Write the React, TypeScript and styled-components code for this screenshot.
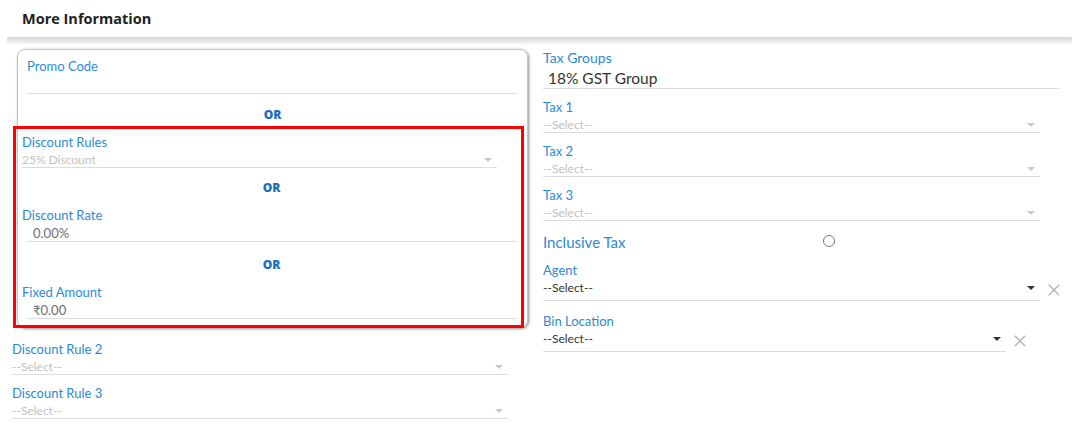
import React from 'react';
import styled, { createGlobalStyle } from 'styled-components';

const GlobalStyle = createGlobalStyle`
  body {
    margin: 0;
    background: #fff;
    font-family: Lato, 'Open Sans', sans-serif;
  }
`;

type Tone = 'empty' | 'muted' | 'dark' | 'grey' | 'big';

interface FieldProps {
  label: string;
  value?: string;
  tone?: Tone;
  arrow?: boolean;
  clear?: boolean;
  lineWidth?: number;
  indent?: number;
  labelSize?: number;
  gap?: number;
}

const Field = ({
  label,
  value = '',
  tone = 'muted',
  arrow,
  clear,
  lineWidth,
  indent = 0,
  labelSize = 13,
  gap = 0,
}: FieldProps) => (
  <FieldWrap $gap={gap}>
    <Label $size={labelSize}>{label}</Label>
    <InputRow>
      <Input $width={lineWidth} $indent={indent} $tone={tone}>
        <span>{value}</span>
        {arrow && <Caret $dark={tone === 'dark'} />}
      </Input>
      {clear && (
        <ClearIcon viewBox="0 0 16 16">
          <path d="M2 2 L14 14 M14 2 L2 14" />
        </ClearIcon>
      )}
    </InputRow>
  </FieldWrap>
);

const App = () => {
  return (
    <>
      <GlobalStyle />
      <Header>More Information</Header>
      <ShadowBar />
      <Columns>
        <LeftColumn>
          <Card>
            <Field label="Promo Code" tone="empty" lineWidth={490} />
            <Or $pad={9}>OR</Or>
            <Highlight>
              <Field label="Discount Rules" value="25% Discount" arrow lineWidth={475} />
              <Or $top={12}>OR</Or>
              <Field label="Discount Rate" value="0.00%" tone="grey" indent={6} lineWidth={490} />
              <Or $top={15}>OR</Or>
              <Field label="Fixed Amount" value="₹0.00" tone="grey" indent={6} lineWidth={490} />
            </Highlight>
          </Card>
          <Below>
            <Field label="Discount Rule 2" value="--Select--" arrow lineWidth={496} />
            <Field label="Discount Rule 3" value="--Select--" arrow lineWidth={496} gap={9} />
          </Below>
        </LeftColumn>
        <RightColumn>
          <Field label="Tax Groups" value="18% GST Group" tone="big" indent={5} lineWidth={516} labelSize={14} />
          <Field label="Tax 1" value="--Select--" arrow lineWidth={497} gap={9} />
          <Field label="Tax 2" value="--Select--" arrow lineWidth={497} gap={9} />
          <Field label="Tax 3" value="--Select--" arrow lineWidth={497} gap={9} />
          <ToggleRow>
            <ToggleLabel>Inclusive Tax</ToggleLabel>
            <Radio />
          </ToggleRow>
          <Field label="Agent" value="--Select--" tone="dark" arrow clear lineWidth={497} />
          <Field label="Bin Location" value="--Select--" tone="dark" arrow clear lineWidth={463} gap={11} />
        </RightColumn>
      </Columns>
    </>
  );
};

const Header = styled.div`
  height: 36px;
  padding-left: 22px;
  display: flex;
  align-items: center;
  font-family: 'Open Sans', sans-serif;
  font-weight: 700;
  font-size: 14.5px;
  color: #222;
`;

const ShadowBar = styled.div`
  height: 7px;
  margin: 1px 8px 0 7px;
  background: linear-gradient(#d6d6d6, #ececec 70%, #f7f7f7);
  border-radius: 2px;
  filter: blur(0.6px);
`;

const Columns = styled.div`
  display: grid;
  grid-template-columns: 517px 1fr;
  column-gap: 14px;
  padding: 5px 0 0 12px;
`;

const LeftColumn = styled.div`
  display: flex;
  flex-direction: column;
`;

const RightColumn = styled.div`
  display: flex;
  flex-direction: column;
`;

const Card = styled.div`
  margin-left: 5px;
  width: 500px;
  border: 1px solid #c4c4c4;
  border-radius: 8px;
  box-shadow: 1px 1px 3px rgba(0, 0, 0, 0.45);
  padding: 7px 0 0 9px;
`;

const Highlight = styled.div`
  margin: -7px 0 -1px -14px;
  width: 499px;
  border: 3px solid #f00;
  padding: 4px 0 6px 6px;
`;

const Below = styled.div`
  margin-top: 12px;
`;

const Or = styled.div<{ $top?: number; $pad?: number }>`
  margin-top: ${(p) => p.$top ?? 13}px;
  margin-bottom: 10px;
  padding-right: ${(p) => p.$pad ?? 0}px;
  text-align: center;
  font-family: 'Open Sans', sans-serif;
  font-weight: 800;
  font-size: 12px;
  line-height: 16px;
  color: #196fc0;
`;

const FieldWrap = styled.div<{ $gap: number }>`
  margin-top: ${(p) => p.$gap}px;
`;

const Label = styled.div<{ $size: number }>`
  font-size: ${(p) => p.$size}px;
  line-height: 18px;
  color: #2b8ad6;
`;

const InputRow = styled.div`
  display: flex;
  align-items: center;
`;

const toneStyles: Record<Tone, string> = {
  empty: 'height: 19px;',
  muted: 'color: #c2c2c2; font-size: 12px; height: 17px;',
  grey: 'color: #6f6f6f; font-size: 13px; height: 18px; margin-left: 5px;',
  dark: 'color: #333; font-size: 12px; height: 22px; align-items: flex-start !important; padding-top: 1px;',
  big: 'color: #333; font-size: 15.5px; height: 22px;',
};

const Input = styled.div<{ $width?: number; $indent: number; $tone: Tone }>`
  width: ${(p) => (p.$width ? `${p.$width}px` : '100%')};
  padding-left: ${(p) => p.$indent}px;
  box-sizing: border-box;
  display: flex;
  align-items: center;
  justify-content: space-between;
  border-bottom: 1px solid #dcdcdc;
  ${(p) => toneStyles[p.$tone]}
`;

const Caret = styled.span<{ $dark: boolean }>`
  width: 0;
  height: 0;
  margin-right: 5px;
  margin-top: ${(p) => (p.$dark ? 6 : 1)}px;
  border-left: 4px solid transparent;
  border-right: 4px solid transparent;
  border-top: 4px solid ${(p) => (p.$dark ? '#333' : '#c8c8c8')};
`;

const ClearIcon = styled.svg`
  width: 14px;
  height: 14px;
  margin-left: 7px;
  fill: none;
  stroke: #b4b4b4;
  stroke-width: 1.6;
`;

const ToggleRow = styled.div`
  display: flex;
  align-items: center;
  height: 22px;
  margin: 10px 0 8px;
`;

const ToggleLabel = styled.div`
  width: 280px;
  font-size: 15px;
  color: #2b8ad6;
`;

const Radio = styled.span`
  width: 10px;
  height: 10px;
  border: 1px solid #777;
  border-radius: 50%;
  margin-top: -2px;
`;

export default App;
